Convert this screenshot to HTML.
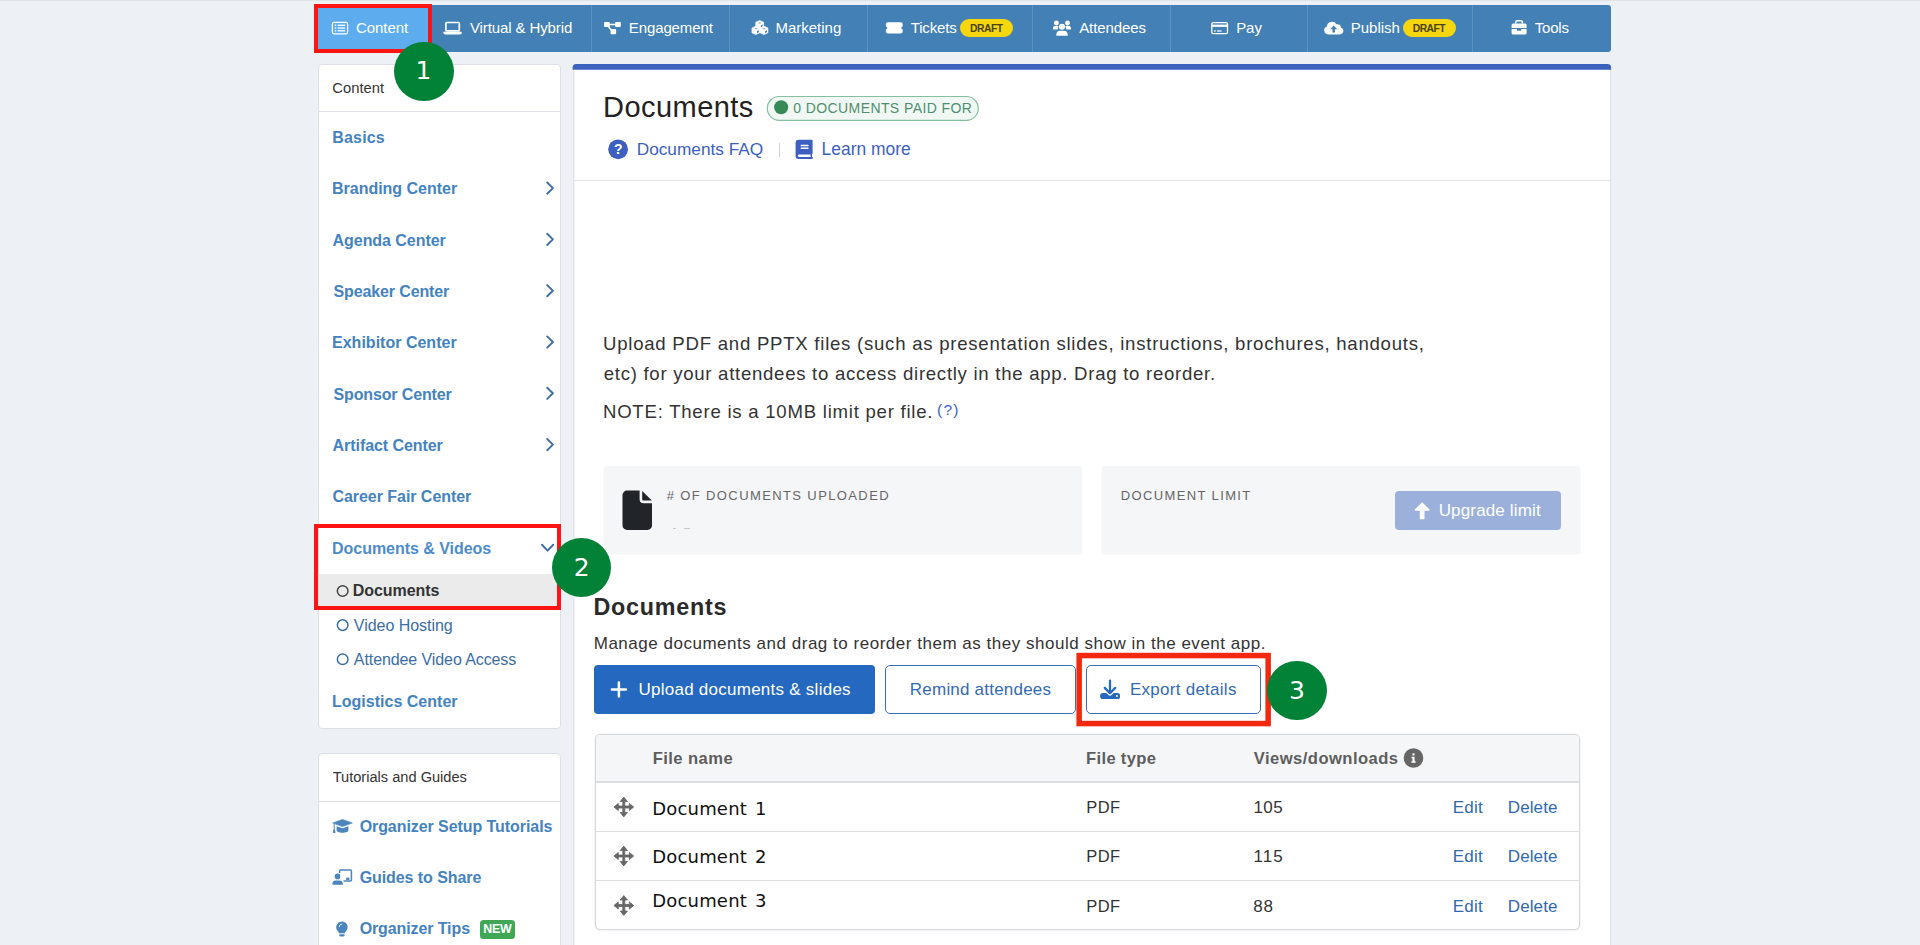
<!DOCTYPE html>
<html lang="en"><head><meta charset="utf-8"><title>Documents</title>
<style>
html,body{margin:0;padding:0;}
body{width:1920px;height:945px;overflow:hidden;background:#edf0f5;font-family:"Liberation Sans",Arial,sans-serif;position:relative;}
.t{position:absolute;white-space:nowrap;line-height:0;height:0;display:block;}
svg{position:absolute;overflow:visible;}
</style></head>
<body>
<div style="position:absolute;left:0px;top:0px;width:1920px;height:1px;background:#e0e3e7;"></div>
<div id="nav">
<div style="position:absolute;left:317px;top:5px;width:1294px;height:47px;background:#4380b6;border-radius:3px;"></div>
<div style="position:absolute;left:317px;top:5px;width:115px;height:47px;background:#5cacee;border-radius:3px 0 0 3px;"></div>
<div style="position:absolute;left:591px;top:5px;width:1px;height:47px;background:rgba(255,255,255,0.13);"></div>
<div style="position:absolute;left:729px;top:5px;width:1px;height:47px;background:rgba(255,255,255,0.13);"></div>
<div style="position:absolute;left:867px;top:5px;width:1px;height:47px;background:rgba(255,255,255,0.13);"></div>
<div style="position:absolute;left:1032px;top:5px;width:1px;height:47px;background:rgba(255,255,255,0.13);"></div>
<div style="position:absolute;left:1170px;top:5px;width:1px;height:47px;background:rgba(255,255,255,0.13);"></div>
<div style="position:absolute;left:1307px;top:5px;width:1px;height:47px;background:rgba(255,255,255,0.13);"></div>
<div style="position:absolute;left:1472px;top:5px;width:1px;height:47px;background:rgba(255,255,255,0.13);"></div>
<span class="t" style='left:355.94px;top:28.00px;font-size:15px;color:#fff;letter-spacing:-0.061px;'>Content</span>
<span class="t" style='left:469.93px;top:28.00px;font-size:15px;color:#fff;letter-spacing:-0.107px;'>Virtual &amp; Hybrid</span>
<span class="t" style='left:628.77px;top:28.00px;font-size:15px;color:#fff;letter-spacing:-0.103px;'>Engagement</span>
<span class="t" style='left:775.47px;top:28.00px;font-size:15px;color:#fff;letter-spacing:-0.008px;'>Marketing</span>
<span class="t" style='left:910.66px;top:28.00px;font-size:15px;color:#fff;letter-spacing:-0.128px;'>Tickets</span>
<span class="t" style='left:1079.17px;top:28.00px;font-size:15px;color:#fff;letter-spacing:-0.098px;'>Attendees</span>
<span class="t" style='left:1236.17px;top:28.00px;font-size:15px;color:#fff;letter-spacing:-0.044px;'>Pay</span>
<span class="t" style='left:1350.67px;top:28.00px;font-size:15px;color:#fff;letter-spacing:0.018px;'>Publish</span>
<span class="t" style='left:1534.66px;top:28.00px;font-size:15px;color:#fff;letter-spacing:-0.16px;'>Tools</span>
<div style="position:absolute;left:960px;top:18.7px;width:53px;height:18px;background:#f6d70f;border-radius:9px;"></div>
<span class="t" style='left:970.11px;top:29.00px;font-size:10.3px;color:#4a4312;font-weight:700;letter-spacing:-0.5px;'>DRAFT</span>
<div style="position:absolute;left:1403px;top:18.7px;width:52.6px;height:18px;background:#f6d70f;border-radius:9px;"></div>
<span class="t" style='left:1412.71px;top:29.00px;font-size:10.3px;color:#4a4312;font-weight:700;letter-spacing:-0.5px;'>DRAFT</span>
<svg width="1920" height="945" viewBox="0 0 1920 945" style="left:0;top:0;pointer-events:none"><rect x="332.4" y="22.4" width="15.2" height="11.4" rx="1.8" fill="none" stroke="#fff" stroke-width="1.3"/><rect x="334.7" y="24.6" width="1.5" height="1.4" fill="#fff"/><rect x="337.6" y="24.650000000000002" width="7.6" height="1.3" fill="#fff"/><rect x="334.7" y="27.35" width="1.5" height="1.4" fill="#fff"/><rect x="337.6" y="27.400000000000002" width="7.6" height="1.3" fill="#fff"/><rect x="334.7" y="30.1" width="1.5" height="1.4" fill="#fff"/><rect x="337.6" y="30.150000000000002" width="7.6" height="1.3" fill="#fff"/><rect x="445.9" y="22.5" width="13.4" height="8.4" rx="1" fill="none" stroke="#fff" stroke-width="1.7"/><path d="M443.3 31.7H461.8V32.4a2 2 0 0 1-2 2H445.3a2 2 0 0 1-2-2Z" fill="#fff"/><rect x="604.1" y="22" width="5.6" height="5" rx="0.8" fill="#fff"/><rect x="615.2" y="22" width="5.6" height="5" rx="0.8" fill="#fff"/><rect x="610.6" y="29.1" width="5.5" height="5.1" rx="0.8" fill="#fff"/><path d="M609 24.5H616M607.6 25.5L612.4 31.5" stroke="#fff" stroke-width="1.5" fill="none"/><polygon points="759.70,20.50 763.65,22.20 763.65,27.10 759.70,28.90 755.75,27.10 755.75,22.20" fill="#fff" stroke="#fff" stroke-width="0.6" stroke-linejoin="round"/><ellipse cx="759.7" cy="23.0" rx="1.5" ry="0.65" fill="#4380b6" opacity="0.6"/><polygon points="760.8000000000001,25.5 762.7,24.6 762.7,26.5 760.8000000000001,27.4" fill="#4380b6"/><polygon points="755.90,26.20 759.85,27.90 759.85,32.80 755.90,34.60 751.95,32.80 751.95,27.90" fill="#fff" stroke="#fff" stroke-width="0.6" stroke-linejoin="round"/><ellipse cx="755.9" cy="28.7" rx="1.5" ry="0.65" fill="#4380b6" opacity="0.6"/><polygon points="757.0,31.2 758.9,30.299999999999997 758.9,32.2 757.0,33.1" fill="#4380b6"/><polygon points="764.00,26.20 767.95,27.90 767.95,32.80 764.00,34.60 760.05,32.80 760.05,27.90" fill="#fff" stroke="#fff" stroke-width="0.6" stroke-linejoin="round"/><ellipse cx="764.0" cy="28.7" rx="1.5" ry="0.65" fill="#4380b6" opacity="0.6"/><polygon points="765.1,31.2 767.0,30.299999999999997 767.0,32.2 765.1,33.1" fill="#4380b6"/><path d="M887.9 22.3H900.7a2 2 0 0 1 2 2V26.5a1.4 1.4 0 0 0 0 2.8V31.5a2 2 0 0 1-2 2H887.9a2 2 0 0 1-2-2V29.3a1.4 1.4 0 0 0 0-2.8V24.3a2 2 0 0 1 2-2Z" fill="#fff"/><circle cx="1061.95" cy="26.8" r="3.05" fill="#fff"/><path d="M1056.3 35.7V34.6a3.9 3.9 0 0 1 3.9-3.8h3.6a3.9 3.9 0 0 1 3.9 3.8V35.7Z" fill="#fff"/><circle cx="1056.4" cy="22.9" r="2.45" fill="#fff"/><circle cx="1067.5" cy="22.9" r="2.45" fill="#fff"/><path d="M1052.9 29.5V28.5a2.7 2.7 0 0 1 2.7-2.7h1.6a2.6 2.6 0 0 1 1.5 0.5a4.8 4.8 0 0 0-1 3.2Z" fill="#fff"/><path d="M1071 29.5V28.5a2.7 2.7 0 0 0-2.7-2.7h-1.6a2.6 2.6 0 0 0-1.5 0.5a4.8 4.8 0 0 1 1 3.2Z" fill="#fff"/><rect x="1211.8" y="22.6" width="15.7" height="11" rx="1.6" fill="none" stroke="#fff" stroke-width="1.3"/><rect x="1211.8" y="24.6" width="15.7" height="2.3" fill="#fff"/><rect x="1214" y="30.4" width="1.8" height="1.2" fill="#fff"/><rect x="1217" y="30.4" width="4.6" height="1.2" fill="#fff"/><g transform="translate(0,34.4) scale(1,0.93) translate(0,-34.4)"><path d="M1328.6 34.4a4.4 4.4 0 0 1-1.6-8.5a5 5 0 0 1 9.4-2.3a3.3 3.3 0 0 1 4.4 3.6a3.7 3.7 0 0 1-1.4 7.2Z" fill="#fff"/></g><path d="M1333.7 25.6L1337.2 29.3H1334.9V32.4H1332.5V29.3H1330.2Z" fill="#4380b6"/><path d="M1515.8 23.6V22.2a1.5 1.5 0 0 1 1.5-1.5h3.6a1.5 1.5 0 0 1 1.5 1.5V23.6" fill="none" stroke="#fff" stroke-width="1.5"/><path d="M1513.1 23.5H1525.1a1.5 1.5 0 0 1 1.5 1.5V28H1511.6V25a1.5 1.5 0 0 1 1.5-1.5Z" fill="#fff"/><path d="M1511.6 29H1517V30.2a0.6 0.6 0 0 0 0.6 0.6h3a0.6 0.6 0 0 0 0.6-0.6V29H1526.6V32.9a1.5 1.5 0 0 1-1.5 1.5H1513.1a1.5 1.5 0 0 1-1.5-1.5Z" fill="#fff"/></svg>
</div>
<div id="side">
<div style="position:absolute;left:318px;top:64px;width:243px;height:665px;background:#fff;border:1px solid #dde1e7;border-radius:4px;box-sizing:border-box;"></div>
<div style="position:absolute;left:319px;top:111px;width:241px;height:1px;background:#dde1e7;"></div>
<span class="t" style='left:332.35px;top:88.00px;font-size:14.78px;color:#333;'>Content</span>
<span class="t" style='left:332.23px;top:138.00px;font-size:16px;color:#4483bf;font-weight:700;letter-spacing:0.187px;'>Basics</span>
<span class="t" style='left:332.03px;top:189.00px;font-size:16px;color:#4483bf;font-weight:700;letter-spacing:-0.017px;'>Branding Center</span>
<span class="t" style='left:332.60px;top:241.00px;font-size:16px;color:#4483bf;font-weight:700;letter-spacing:-0.055px;'>Agenda Center</span>
<span class="t" style='left:333.54px;top:292.00px;font-size:16px;color:#4483bf;font-weight:700;letter-spacing:-0.13px;'>Speaker Center</span>
<span class="t" style='left:332.03px;top:343.00px;font-size:16px;color:#4483bf;font-weight:700;letter-spacing:0.01px;'>Exhibitor Center</span>
<span class="t" style='left:333.54px;top:395.00px;font-size:16px;color:#4483bf;font-weight:700;letter-spacing:-0.139px;'>Sponsor Center</span>
<span class="t" style='left:332.60px;top:446.00px;font-size:16px;color:#4483bf;font-weight:700;letter-spacing:-0.064px;'>Artifact Center</span>
<span class="t" style='left:332.44px;top:497.00px;font-size:16px;color:#4483bf;font-weight:700;letter-spacing:-0.042px;'>Career Fair Center</span>
<span class="t" style='left:332.03px;top:549.00px;font-size:16px;color:#4d8ccc;font-weight:700;letter-spacing:-0.03px;'>Documents &amp; Videos</span>
<span class="t" style='left:331.93px;top:702.00px;font-size:16px;color:#4483bf;font-weight:700;letter-spacing:0.017px;'>Logistics Center</span>
<div style="position:absolute;left:319px;top:574px;width:241px;height:34px;background:#ebebeb;"></div>
<span class="t" style='left:352.83px;top:591.00px;font-size:16px;color:#333;font-weight:700;letter-spacing:-0.062px;'>Documents</span>
<span class="t" style='left:353.83px;top:626.00px;font-size:16px;color:#3b6ea5;letter-spacing:-0.036px;'>Video Hosting</span>
<span class="t" style='left:353.87px;top:660.00px;font-size:16px;color:#3b6ea5;letter-spacing:-0.093px;'>Attendee Video Access</span>
<svg width="1920" height="945" style="left:0;top:0"><circle cx="342.65" cy="591.05" r="5.3" fill="none" stroke="#444" stroke-width="1.5"/><circle cx="342.65" cy="625.1" r="5.3" fill="none" stroke="#3b6ea5" stroke-width="1.5"/><circle cx="342.65" cy="659.2" r="5.3" fill="none" stroke="#3b6ea5" stroke-width="1.5"/></svg>
<div style="position:absolute;left:318px;top:753px;width:243px;height:231px;background:#fff;border:1px solid #dde1e7;border-radius:4px;box-sizing:border-box;"></div>
<div style="position:absolute;left:319px;top:801px;width:241px;height:1px;background:#dde1e7;"></div>
<span class="t" style='left:332.67px;top:777.00px;font-size:14.62px;color:#333;'>Tutorials and Guides</span>
<span class="t" style='left:359.64px;top:827.00px;font-size:16px;color:#4483bf;font-weight:700;letter-spacing:-0.066px;'>Organizer Setup Tutorials</span>
<span class="t" style='left:359.64px;top:878.00px;font-size:16px;color:#4483bf;font-weight:700;letter-spacing:-0.071px;'>Guides to Share</span>
<span class="t" style='left:359.64px;top:929.00px;font-size:16px;color:#4483bf;font-weight:700;letter-spacing:-0.102px;'>Organizer Tips</span>
<div style="position:absolute;left:480px;top:920px;width:35px;height:19px;background:#40a755;border-radius:3.5px;"></div>
<span class="t" style='left:483.17px;top:929.00px;font-size:12.4px;color:#fff;font-weight:700;letter-spacing:-0.194px;'>NEW</span>
<svg width="1920" height="945" viewBox="0 0 1920 945" style="left:0;top:0;pointer-events:none"><path d="M547.2 182.5L552.9 188.1L547.2 193.7" fill="none" stroke="#3f6fa8" stroke-width="1.9" stroke-linecap="round" stroke-linejoin="round"/><path d="M547.2 233.8L552.9 239.4L547.2 245.0" fill="none" stroke="#3f6fa8" stroke-width="1.9" stroke-linecap="round" stroke-linejoin="round"/><path d="M547.2 285.09999999999997L552.9 290.7L547.2 296.3" fill="none" stroke="#3f6fa8" stroke-width="1.9" stroke-linecap="round" stroke-linejoin="round"/><path d="M547.2 336.4L552.9 342.0L547.2 347.6" fill="none" stroke="#3f6fa8" stroke-width="1.9" stroke-linecap="round" stroke-linejoin="round"/><path d="M547.2 387.7L552.9 393.3L547.2 398.90000000000003" fill="none" stroke="#3f6fa8" stroke-width="1.9" stroke-linecap="round" stroke-linejoin="round"/><path d="M547.2 439.0L552.9 444.6L547.2 450.20000000000005" fill="none" stroke="#3f6fa8" stroke-width="1.9" stroke-linecap="round" stroke-linejoin="round"/><path d="M542 544.8L547.6 550.6L553.2 544.8" fill="none" stroke="#3f6fa8" stroke-width="2" stroke-linecap="round" stroke-linejoin="round"/><path d="M332.6 823L342.5 819.4L352.4 823L342.5 826.6Z" fill="#4a86bd" stroke="#4a86bd" stroke-width="0.6" stroke-linejoin="round"/><path d="M336.6 826.2L342.5 828.3L348.4 826.2V830.3C348.4 831.8 345.8 832.8 342.5 832.8C339.2 832.8 336.6 831.8 336.6 830.3Z" fill="#4a86bd"/><path d="M334.2 824V829.2L333.3 832.6H335.1L334.2 829.2" fill="#4a86bd" stroke="#4a86bd" stroke-width="1" stroke-linejoin="round"/><path d="M339.6 873V870.9a0.9 0.9 0 0 1 0.9-0.9h10a0.9 0.9 0 0 1 0.9 0.9v9.2a0.9 0.9 0 0 1-0.9 0.9H343.5" fill="none" stroke="#4a86bd" stroke-width="1.5"/><rect x="346.2" y="877.6" width="3.2" height="2.4" fill="#4a86bd"/><circle cx="337.5" cy="876.4" r="2.8" fill="#4a86bd"/><path d="M332.4 884.7v-0.9a3.4 3.4 0 0 1 3.4-3.4h3.6a3.4 3.4 0 0 1 3.4 3.4v0.9Z" fill="#4a86bd"/><path d="M341.9 921.4a5.7 5.7 0 0 1 4.3 9.4c-0.7 0.8-1.2 1.6-1.4 2.4h-5.8c-0.2-0.8-0.7-1.6-1.4-2.4a5.7 5.7 0 0 1 4.3-9.4Z" fill="#4a86bd"/><path d="M339.3 934.2h5.2v1.1l-0.9 1.2h-3.4l-0.9-1.2Z" fill="#4a86bd"/><path d="M339.2 926.6a2.8 2.8 0 0 1 2.6-2.6" fill="none" stroke="#fff" stroke-width="0.8" stroke-linecap="round"/></svg>
</div>
<div id="main">
<div style="position:absolute;left:573px;top:64px;width:1038px;height:900px;background:#fff;border:1px solid #dfe2e8;border-left:1px solid #e2e4e9;border-top:none;border-radius:4px 4px 0 0;box-sizing:border-box;"></div>
<svg width="1920" height="945" style="left:0;top:0"><path d="M572.6 69.7V67.6a3.5 3.5 0 0 1 3.5-3.5H1607.6a3.5 3.5 0 0 1 3.5 3.5V69.7Z" fill="#3b63be"/><rect x="573.9" y="69.7" width="0.8" height="880" fill="#e9ebee"/></svg>
<div style="position:absolute;left:574px;top:180px;width:1036px;height:1px;background:#e4e6ea;"></div>
<span class="t" style='left:603.02px;top:107.00px;font-size:29px;color:#222;letter-spacing:0.457px;'>Documents</span>
<svg width="1920" height="945" style="left:0;top:0"><rect x="767.3" y="96.5" width="211" height="23.9" rx="11.95" fill="#f1f8f4" stroke="#86bf9f" stroke-width="1.2"/><circle cx="781.15" cy="107.3" r="7" fill="#358a58"/></svg>
<span class="t" style='left:793.20px;top:108.00px;font-size:14px;color:#4f8f6e;letter-spacing:0.412px;'>0 DOCUMENTS PAID FOR</span>
<span class="t" style='left:636.68px;top:149.00px;font-size:17.26px;color:#3d5fc0;'>Documents FAQ</span>
<div style="position:absolute;left:778.5px;top:143px;width:1px;height:13.5px;background:#c9d1e0;"></div>
<span class="t" style='left:821.57px;top:149.00px;font-size:17.44px;color:#3d5fc0;'>Learn more</span>
<span class="t" style='left:603.07px;top:344.00px;font-size:18.6px;color:#333;letter-spacing:0.746px;'>Upload PDF and PPTX files (such as presentation slides, instructions, brochures, handouts,</span>
<span class="t" style='left:603.71px;top:374.00px;font-size:18.6px;color:#333;letter-spacing:0.717px;'>etc) for your attendees to access directly in the app. Drag to reorder.</span>
<span class="t" style='left:602.97px;top:412.00px;font-size:18.6px;color:#333;letter-spacing:0.753px;'>NOTE: There is a 10MB limit per file.</span>
<span class="t" style='left:936.94px;top:410.00px;font-size:15.5px;color:#3d5fc0;letter-spacing:1.289px;'>(?)</span>
<svg width="1920" height="945" style="left:0;top:0"><rect x="603.5" y="466.1" width="478.8" height="88.5" rx="3.5" fill="#f5f6f8"/><rect x="1101.5" y="466.1" width="479.1" height="88.5" rx="3.5" fill="#f5f6f8"/></svg>
<span class="t" style='left:666.64px;top:496.00px;font-size:13px;color:#666;letter-spacing:1.389px;'># OF DOCUMENTS UPLOADED</span>
<span class="t" style='left:1120.63px;top:496.00px;font-size:13px;color:#666;letter-spacing:1.381px;'>DOCUMENT LIMIT</span>
<div style="position:absolute;left:673px;top:528px;width:3px;height:1px;background:#c8cacd;"></div>
<div style="position:absolute;left:684px;top:528px;width:6px;height:1px;background:#c8cacd;"></div>
<div style="position:absolute;left:1394.7px;top:490.8px;width:166.5px;height:39.5px;background:#9bb1dc;border-radius:4px;"></div>
<span class="t" style='left:1438.69px;top:511.00px;font-size:17px;color:#fff;letter-spacing:0.149px;'>Upgrade limit</span>
<span class="t" style='left:593.54px;top:607.00px;font-size:23.3px;color:#2a2a2a;font-weight:700;letter-spacing:0.755px;'>Documents</span>
<span class="t" style='left:593.71px;top:644.00px;font-size:17px;color:#333;letter-spacing:0.519px;'>Manage documents and drag to reorder them as they should show in the event app.</span>
<div style="position:absolute;left:594px;top:665px;width:281px;height:49px;background:#2468bf;border-radius:4px;"></div>
<span class="t" style='left:638.49px;top:690.00px;font-size:17px;color:#fff;letter-spacing:0.255px;'>Upload documents &amp; slides</span>
<div style="position:absolute;left:885px;top:665px;width:190.5px;height:49px;background:#fff;border:1px solid #3a6fb6;border-radius:5px;box-sizing:border-box;"></div>
<span class="t" style='left:909.86px;top:690.00px;font-size:17px;color:#336ab3;letter-spacing:0.209px;'>Remind attendees</span>
<div style="position:absolute;left:1085.5px;top:665px;width:175.5px;height:49px;background:#fff;border:1px solid #3a6fb6;border-radius:5px;box-sizing:border-box;"></div>
<span class="t" style='left:1130.01px;top:690.00px;font-size:17px;color:#336ab3;letter-spacing:0.262px;'>Export details</span>
<div style="position:absolute;left:594.5px;top:734px;width:985px;height:195.5px;background:#fff;border:1px solid #d6d8dc;border-radius:5px;box-sizing:border-box;box-shadow:0 0 0 0.5px rgba(214,216,220,0.5);overflow:hidden;"><div style="position:absolute;left:0;top:0;width:100%;height:47px;background:#f5f6f8;"></div></div>
<div style="position:absolute;left:595.5px;top:781px;width:983px;height:2px;background:#dddee2;"></div>
<div style="position:absolute;left:595.5px;top:831px;width:983px;height:1px;background:#dcdde1;"></div>
<div style="position:absolute;left:595.5px;top:880px;width:983px;height:1px;background:#dcdde1;"></div>
<span class="t" style='left:652.64px;top:759.00px;font-size:16.6px;color:#5e5e5e;font-weight:700;letter-spacing:0.438px;'>File name</span>
<span class="t" style='left:1086.09px;top:759.00px;font-size:16.6px;color:#5e5e5e;font-weight:700;letter-spacing:0.317px;'>File type</span>
<span class="t" style='left:1253.79px;top:759.00px;font-size:16.6px;color:#5e5e5e;font-weight:700;letter-spacing:0.445px;'>Views/downloads</span>
<span class="t" style='left:652.13px;top:809.00px;font-size:18px;color:#111;font-family:"DejaVu Sans", Verdana, sans-serif;letter-spacing:0.206px;'>Document</span>
<span class="t" style='left:754.92px;top:809.00px;font-size:18px;color:#111;font-family:"DejaVu Sans", Verdana, sans-serif;'>1</span>
<span class="t" style='left:1086.25px;top:807.00px;font-size:16.5px;color:#333;letter-spacing:0.457px;'>PDF</span>
<span class="t" style='left:1253.41px;top:808.00px;font-size:17px;color:#333;letter-spacing:0.472px;'>105</span>
<span class="t" style='left:1452.81px;top:808.00px;font-size:17px;color:#2f69b1;letter-spacing:0.175px;'>Edit</span>
<span class="t" style='left:1507.81px;top:808.00px;font-size:17px;color:#2f69b1;letter-spacing:0.102px;'>Delete</span>
<span class="t" style='left:652.13px;top:857.00px;font-size:18px;color:#111;font-family:"DejaVu Sans", Verdana, sans-serif;letter-spacing:0.206px;'>Document</span>
<span class="t" style='left:754.98px;top:857.00px;font-size:18px;color:#111;font-family:"DejaVu Sans", Verdana, sans-serif;'>2</span>
<span class="t" style='left:1086.25px;top:856.00px;font-size:16.5px;color:#333;letter-spacing:0.457px;'>PDF</span>
<span class="t" style='left:1253.41px;top:857.00px;font-size:17px;color:#333;letter-spacing:1.103px;'>115</span>
<span class="t" style='left:1452.81px;top:857.00px;font-size:17px;color:#2f69b1;letter-spacing:0.175px;'>Edit</span>
<span class="t" style='left:1507.81px;top:857.00px;font-size:17px;color:#2f69b1;letter-spacing:0.102px;'>Delete</span>
<span class="t" style='left:652.13px;top:901.00px;font-size:18px;color:#111;font-family:"DejaVu Sans", Verdana, sans-serif;letter-spacing:0.206px;'>Document</span>
<span class="t" style='left:754.93px;top:901.00px;font-size:18px;color:#111;font-family:"DejaVu Sans", Verdana, sans-serif;'>3</span>
<span class="t" style='left:1086.25px;top:906.00px;font-size:16.5px;color:#333;letter-spacing:0.457px;'>PDF</span>
<span class="t" style='left:1253.26px;top:907.00px;font-size:17px;color:#333;letter-spacing:0.868px;'>88</span>
<span class="t" style='left:1452.81px;top:907.00px;font-size:17px;color:#2f69b1;letter-spacing:0.175px;'>Edit</span>
<span class="t" style='left:1507.81px;top:907.00px;font-size:17px;color:#2f69b1;letter-spacing:0.102px;'>Delete</span>
<svg width="1920" height="945" viewBox="0 0 1920 945" style="left:0;top:0;pointer-events:none"><circle cx="618.1" cy="149.3" r="9.9" fill="#3d5fc0"/><path d="M798.6 139.8H811.6a1 1 0 0 1 1 1V153.2a1 1 0 0 1-0.6 0.9v3a0.9 0.9 0 0 1 0 1.8H798.8a3.2 3.2 0 0 1-3.2-3.2V142.8a3 3 0 0 1 3-3Z" fill="#3d5fc0"/><rect x="800.6" y="144.8" width="8" height="1.4" rx="0.4" fill="#fff"/><rect x="800.6" y="147.6" width="8" height="1.4" rx="0.4" fill="#fff"/><path d="M799 154.6H810.6V156.9H799a1.15 1.15 0 0 1 0-2.3Z" fill="#fff"/><path d="M627 490.6H639.6V499.2a4 4 0 0 0 4 4H652V525.4a4.5 4.5 0 0 1-4.5 4.5H627a4.5 4.5 0 0 1-4.5-4.5V495.1a4.5 4.5 0 0 1 4.5-4.5Z" fill="#212529"/><path d="M642.2 490.9L651.9 500.6H643.2a1 1 0 0 1-1-1Z" fill="#212529"/><path d="M1422.15 502.2L1429.3 509.3a0.8 0.8 0 0 1-0.6 1.4H1424.5V518.4a0.9 0.9 0 0 1-0.9 0.9h-2.9a0.9 0.9 0 0 1-0.9-0.9V510.7H1415.6a0.8 0.8 0 0 1-0.6-1.4Z" fill="#fff"/><path d="M611.9 689.4H625.9M618.9 682.4V696.4" stroke="#fff" stroke-width="2.5" stroke-linecap="round" fill="none"/><rect x="1100.2" y="693.1" width="19.8" height="6" rx="2.6" fill="#2468bf"/><path d="M1104.6 688L1110 693.4L1115.4 688" fill="none" stroke="#fff" stroke-width="4.6" stroke-linecap="round" stroke-linejoin="round"/><path d="M1110 680.6V692.6M1104.8 687.9L1110 693.2L1115.2 687.9" fill="none" stroke="#2468bf" stroke-width="2.3" stroke-linecap="round" stroke-linejoin="round"/><circle cx="1116.9" cy="696.1" r="1" fill="#fff"/><path d="M623.8 797.1L627.4 801.5H624.8V806.0H629.3V803.4L633.6999999999999 807L629.3 810.6V808.0H624.8V812.5H627.4L623.8 816.9L620.1999999999999 812.5H622.8V808.0H618.3V810.6L613.9 807L618.3 803.4V806.0H622.8V801.5H620.1999999999999Z" fill="#666" stroke="#666" stroke-width="0.8" stroke-linejoin="round"/><path d="M623.8 846.1L627.4 850.5H624.8V855.0H629.3V852.4L633.6999999999999 856L629.3 859.6V857.0H624.8V861.5H627.4L623.8 865.9L620.1999999999999 861.5H622.8V857.0H618.3V859.6L613.9 856L618.3 852.4V855.0H622.8V850.5H620.1999999999999Z" fill="#666" stroke="#666" stroke-width="0.8" stroke-linejoin="round"/><path d="M623.8 895.6L627.4 900.0H624.8V904.5H629.3V901.9L633.6999999999999 905.5L629.3 909.1V906.5H624.8V911.0H627.4L623.8 915.4L620.1999999999999 911.0H622.8V906.5H618.3V909.1L613.9 905.5L618.3 901.9V904.5H622.8V900.0H620.1999999999999Z" fill="#666" stroke="#666" stroke-width="0.8" stroke-linejoin="round"/><circle cx="1413.5" cy="758" r="9.8" fill="#666"/><rect x="1412.4" y="753.3" width="2.2" height="2.2" rx="0.5" fill="#fff"/><path d="M1411.5 756.8H1414.6V761.2H1415.6V762.7H1411.4V761.2H1412.4V758.3H1411.5Z" fill="#fff"/></svg>
<span class="t" style='left:613.96px;top:149.00px;font-size:14px;color:#fff;font-weight:700;'>?</span>
</div>
<div id="anno">
<div style="position:absolute;left:314px;top:4px;width:118px;height:49px;border:4px solid #ff1414;box-sizing:border-box;"></div>
<div style="position:absolute;left:314px;top:524px;width:247px;height:86px;border:4px solid #ff1414;box-sizing:border-box;"></div>
<svg width="1920" height="945" style="left:0;top:0"><rect x="1079.15" y="655.55" width="189.0" height="68.00" fill="none" stroke="#f4280f" stroke-width="5.5"/></svg>
<div style="position:absolute;left:394.3px;top:41.599999999999994px;width:59.4px;height:59.4px;background:#018237;border-radius:50%;"></div>
<div style="position:absolute;left:551.8px;top:537.9px;width:59.4px;height:59.4px;background:#018237;border-radius:50%;"></div>
<div style="position:absolute;left:1267.3px;top:660.5999999999999px;width:59.4px;height:59.4px;background:#018237;border-radius:50%;"></div>
<span class="t" style='left:415.45px;top:71.00px;font-size:25px;color:#fff;font-family:"DejaVu Sans", Verdana, sans-serif;'>1</span>
<span class="t" style='left:573.77px;top:568.00px;font-size:25px;color:#fff;font-family:"DejaVu Sans", Verdana, sans-serif;'>2</span>
<span class="t" style='left:1288.90px;top:691.00px;font-size:25px;color:#fff;font-family:"DejaVu Sans", Verdana, sans-serif;'>3</span>
</div>
</body></html>
